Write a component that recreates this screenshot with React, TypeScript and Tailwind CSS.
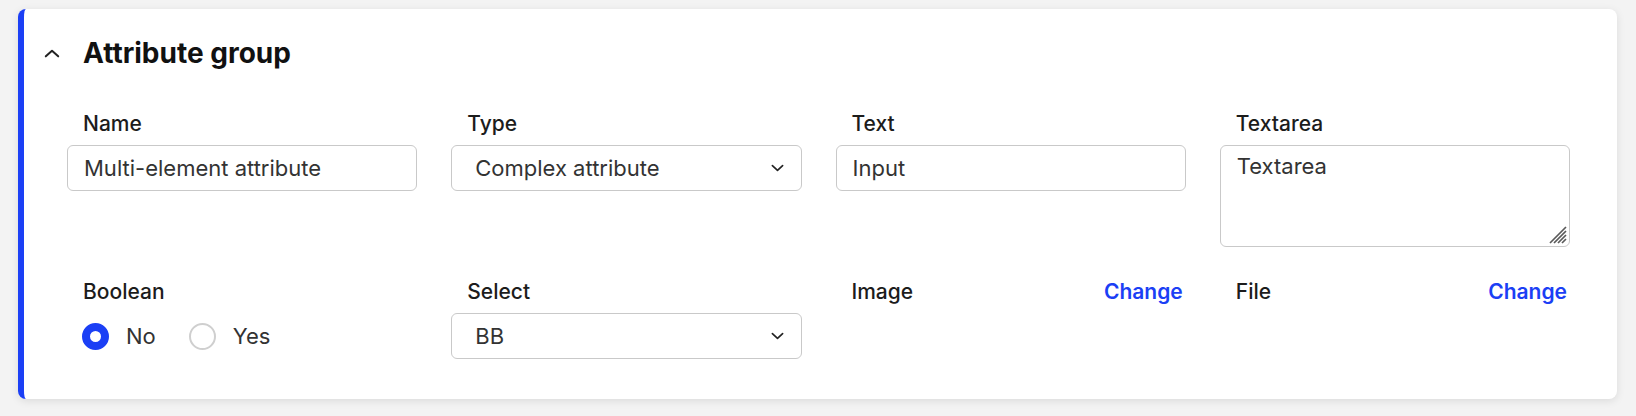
import { useState } from "react";

function Chevron({ className }: { className: string }) {
    return (
        <svg className={className} viewBox="0 0 14 8" fill="none">
            <path d="M1.5 1.5L7 6.5L12.5 1.5" stroke="currentColor" strokeWidth="1.8" strokeLinecap="round" strokeLinejoin="round" />
        </svg>
    );
}

function Label({ children }: { children: React.ReactNode }) {
    return <div className="pl-4 h-6 leading-6 text-[21px] font-medium text-[#1c1c1c] mb-[9px]">{children}</div>;
}

function TextInput({ value }: { value: string }) {
    return (
        <div className="h-[46px] border-[1.5px] border-[#c9c9c9] rounded-md px-4 flex items-center text-[22px] text-[#333]">
            {value}
        </div>
    );
}

function SelectBox({ value }: { value: string }) {
    return (
        <div className="h-[46px] border-[1.5px] border-[#c9c9c9] rounded-md pl-[23px] pr-[17px] flex items-center justify-between text-[22px] text-[#333]">
            <span>{value}</span>
            <Chevron className="w-[13px] h-[8px] text-[#222]" />
        </div>
    );
}

function Radio({ label, checked, onClick }: { label: string; checked: boolean; onClick: () => void }) {
    return (
        <button onClick={onClick} className="flex items-center gap-[17px] text-[22px] text-[#333]">
            <span
                className={
                    checked
                        ? "w-[27px] h-[27px] rounded-full border-[8px] border-[#1b3ff5] bg-white"
                        : "w-[27px] h-[27px] rounded-full border-2 border-[#cfcfcf] bg-white"
                }
            />
            {label}
        </button>
    );
}

function FileField({ label }: { label: string }) {
    return (
        <div className="flex justify-between pl-4 pr-[3px] h-6 leading-6 text-[21px]">
            <span className="font-medium text-[#1c1c1c]">{label}</span>
            <a className="font-semibold text-[#1b3ff5] cursor-pointer">Change</a>
        </div>
    );
}

export default function App() {
    const [bool, setBool] = useState(false);

    return (
        <div className="min-h-screen bg-[#f3f3f3] pt-[9px] pl-[18px] pr-[19px] font-['Inter',sans-serif]">
            <div className="bg-white rounded-lg border-l-[6px] border-[#1b3ff5] shadow-[0_2px_8px_rgba(0,0,0,0.10)] pt-7 pb-10">
                <div className="flex items-center pl-[19px] h-8">
                    <Chevron className="w-[18px] h-[9px] text-[#222] rotate-180" />
                    <h2 className="ml-[22px] text-[28px] leading-8 font-bold text-[#111]">Attribute group</h2>
                </div>

                <div className="mt-[43px] pl-[43px] pr-[47px] grid grid-cols-4 gap-x-[34px] gap-y-[33px]">
                    <div>
                        <Label>Name</Label>
                        <TextInput value="Multi-element attribute" />
                    </div>
                    <div>
                        <Label>Type</Label>
                        <SelectBox value="Complex attribute" />
                    </div>
                    <div>
                        <Label>Text</Label>
                        <TextInput value="Input" />
                    </div>
                    <div>
                        <Label>Textarea</Label>
                        <div className="relative h-[102px] border-[1.5px] border-[#c9c9c9] rounded-md px-4 pt-[4px] text-[22px] text-[#333]">
                            Textarea
                            <svg className="absolute right-[2px] bottom-[2px] w-[18px] h-[18px]" viewBox="0 0 18 18">
                                <path d="M17 1L1 17M17 5L5 17M17 9L9 17M17 13L13 17" stroke="#5a5a5a" strokeWidth="1.7" />
                            </svg>
                        </div>
                    </div>

                    <div>
                        <Label>Boolean</Label>
                        <div className="flex items-center gap-[33px] pl-[15px] h-[46px]">
                            <Radio label="No" checked={!bool} onClick={() => setBool(false)} />
                            <Radio label="Yes" checked={bool} onClick={() => setBool(true)} />
                        </div>
                    </div>
                    <div>
                        <Label>Select</Label>
                        <SelectBox value="BB" />
                    </div>
                    <div>
                        <FileField label="Image" />
                    </div>
                    <div>
                        <FileField label="File" />
                    </div>
                </div>
            </div>
        </div>
    );
}
